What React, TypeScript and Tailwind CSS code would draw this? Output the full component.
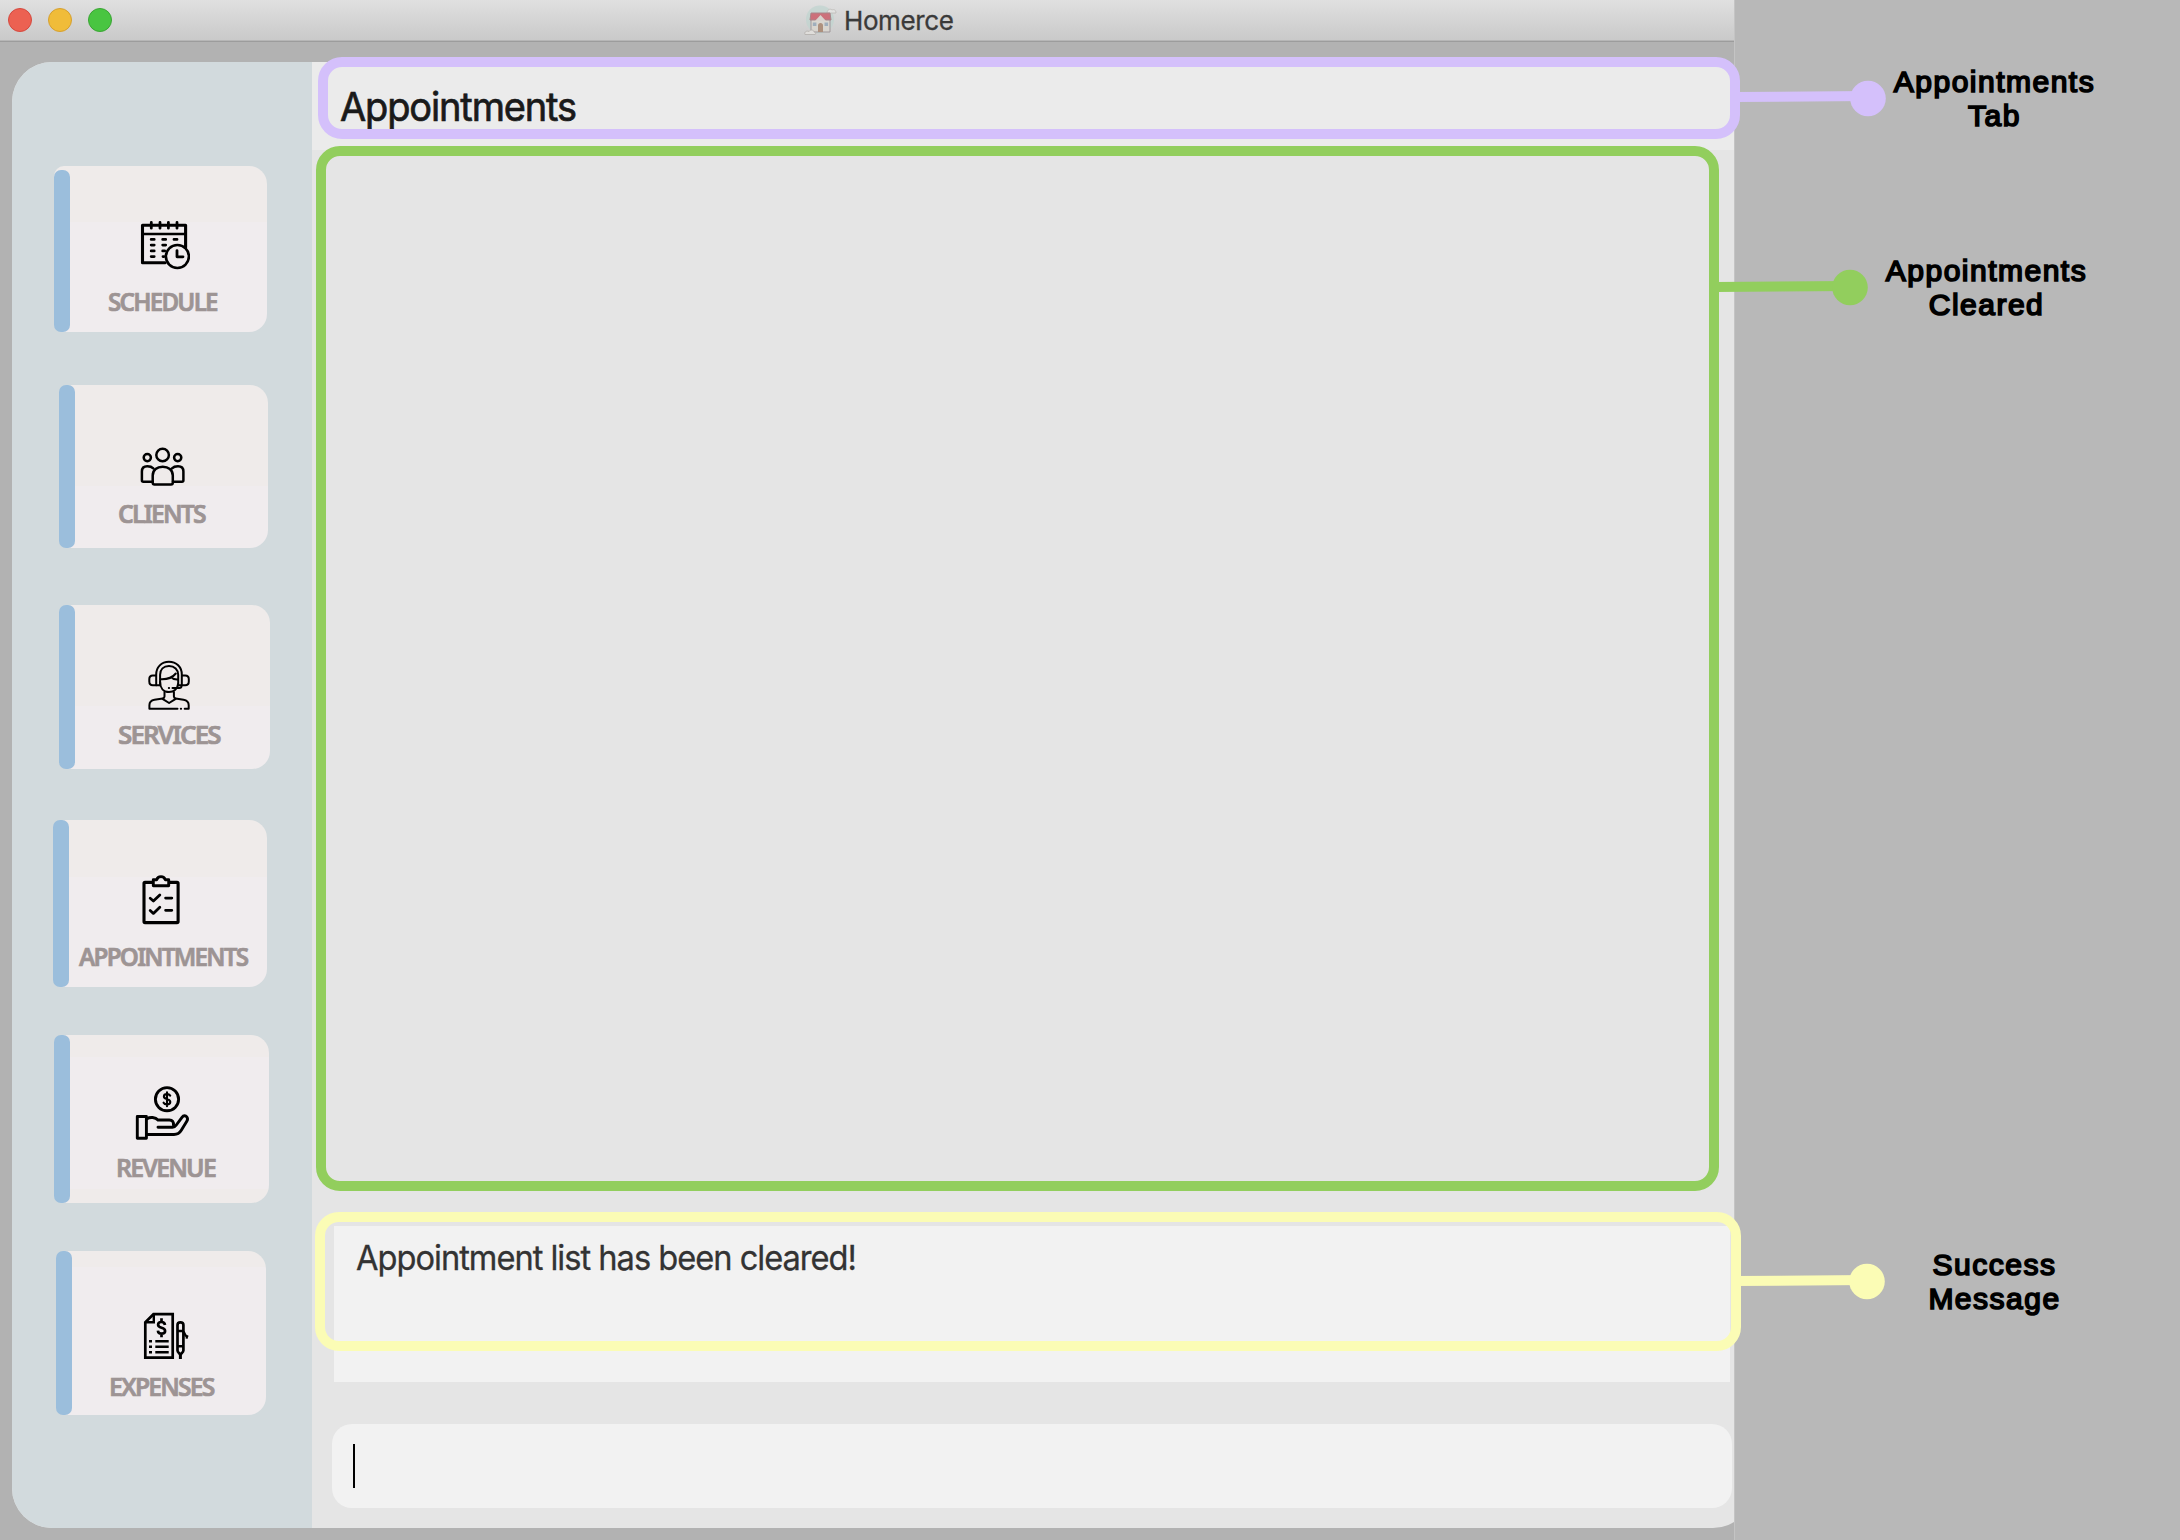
import type { ReactNode } from "react";

const ink = { fill: "none", stroke: "#000", strokeLinecap: "round", strokeLinejoin: "round" } as const;

function ScheduleIcon() {
  return (
    <svg className="block h-[50px] w-[50px]" viewBox="140 220 50 50" {...ink} strokeWidth={3.1}>
      <path d="M165 262.7H142.5V225.3H185.6V247.5" />
      <path d="M142.5 234H185.6" strokeWidth={2.6} />
      <path d="M151.3 222.4V228.2M160 222.4V228.2M168.4 222.4V228.2M177 222.4V228.2" strokeWidth={2.8} />
      <path
        d="M151.2 239.4h3M162.7 239.4h3M174 239.4h3M151.2 245.1h3M162.7 245.1h3M151.2 250.9h3M162.7 250.9h2M151.2 256.6h3M163 256.6h1"
        strokeWidth={2.8}
      />
      <circle cx="177.4" cy="256.5" r="11.5" strokeWidth={2.6} />
      <path d="M177 250.6V256.8H183" strokeWidth={2.8} />
    </svg>
  );
}

function ClientsIcon() {
  return (
    <svg className="block h-[40px] w-[46px]" viewBox="140 447 46 40" {...ink} strokeWidth={2.5}>
      <circle cx="162.6" cy="455" r="6.3" />
      <circle cx="147.3" cy="457.6" r="3.6" />
      <circle cx="177.7" cy="457.6" r="3.6" />
      <path d="M154.5 484.5C153.2 484.5 152.7 484 152.7 482.8V475.5C152.7 470 157 466.7 162.7 466.7C168.4 466.7 172.8 470 172.8 475.5V482.8C172.8 484 172.2 484.5 171 484.5Z" />
      <path d="M152.5 481.7H143.3C142.4 481.7 141.9 481.2 141.9 480.3V471.5C141.9 468 144 466.3 147.3 466.3C150 466.3 152 467 153.3 468.3" />
      <path d="M173 481.7H182C182.9 481.7 183.4 481.2 183.4 480.3V471.5C183.4 468 181.3 466.3 178 466.3C175.2 466.3 173.3 467 172 468.3" />
    </svg>
  );
}

function ServicesIcon() {
  return (
    <svg className="block h-[50px] w-[42px]" viewBox="148.5 660 42 50" {...ink} strokeWidth={2}>
      <path d="M156.7 685.2V674.5C156.7 667 162 661.8 169.4 661.8C176.8 661.8 182.3 667 182.3 674.5V685.2" />
      <path d="M160.6 685.2V674.8C160.6 669.5 164 666 169.5 666C175 666 178.7 669.5 178.7 674.8V685.2" />
      <path d="M156.5 675.5H153.3C151 675.5 149.8 677 149.8 679V681.5C149.8 684 151 685.2 153.3 685.2H160.5" />
      <path d="M182.5 675.5H185.7C188 675.5 189.3 677 189.3 679V681.5C189.3 684 188 685.2 185.7 685.2H178.7" />
      <path d="M160.6 682C160.6 688 164 692 169.5 692C174.6 692 178 688.5 178.6 684" />
      <path d="M161 679.3C167 679.6 173 677.6 176.3 673.5M171.8 677.2C173.5 679 176 679.6 178.5 679.4" />
      <path d="M182 686C182 687.4 181 688 179.8 688H173M169.3 688h.3" />
      <path d="M165 692V696.5C165 697.6 164.4 698.2 163.2 698.4L155 699.7C151.3 700.4 149.9 702.3 149.9 705.2V708.7H178" />
      <path d="M174.4 692V696.5C174.4 697.6 175 698.2 176.2 698.4L184 699.7C187.8 700.4 189.2 702.3 189.2 705.2V708.7H185.2M181.3 708.7h.3" />
      <path d="M163 698.8L169.6 703L176.2 698.8" />
    </svg>
  );
}

function ClipboardIcon() {
  return (
    <svg className="block h-[50px] w-[38px]" viewBox="142 875 38 50" {...ink} strokeWidth={3.1}>
      <path d="M152.5 882.4H145C144.3 882.4 144 882.7 144 883.4V921.5C144 922.3 144.3 922.6 145 922.6H177C177.8 922.6 178.1 922.3 178.1 921.5V883.4C178.1 882.7 177.8 882.4 177 882.4H169.5" />
      <path d="M153.3 885.8V879.7H156.8C157.3 877.7 158.7 876.6 161 876.6C163.2 876.6 164.6 877.7 165.2 879.7H168.7V885.8Z" strokeWidth={2.9} />
      <path d="M150.2 898.2L153.4 901L159.8 894.9M150.2 910.4L153.4 913.4L159.8 907.2M165.6 898.1H171.8M165.6 910.3H171.8" strokeWidth={2.8} />
    </svg>
  );
}

function RevenueIcon() {
  return (
    <svg className="block h-[56px] w-[56px]" viewBox="135 1085 56 56" {...ink} strokeWidth={2.9}>
      <circle cx="167" cy="1099.2" r="11.6" />
      <path d="M170.2 1095.6C169.5 1094.5 168.6 1094.1 167 1094.1C165 1094.1 163.9 1095.1 163.9 1096.4C163.9 1099.8 170.3 1098.3 170.3 1102C170.3 1103.5 169 1104.4 167 1104.4C165.2 1104.4 164.2 1103.9 163.6 1102.7M167 1092.2V1106.2" strokeWidth={2.1} />
      <path d="M137.3 1116.5H146.4V1138.2H137.3Z" />
      <path d="M147 1118.7C150 1116.8 155.4 1117 158 1120H169.3C172.6 1120 173.7 1122 173.5 1125.3" />
      <path d="M158 1127.3H172.5C174.3 1127.3 175.3 1126.5 176.3 1125L182 1117.3C183.5 1115.2 185.7 1115.4 186.8 1116.8C187.9 1118.2 187.7 1119.8 186.8 1121.3L181.3 1130.3C179.5 1133.3 177.4 1134.5 174 1134.5H147" />
    </svg>
  );
}

function ExpensesIcon() {
  return (
    <svg className="block h-[48px] w-[46px]" viewBox="143 1312 46 48" fill="none" stroke="#000" strokeWidth={2.7}>
      <path d="M153.5 1314.2H172.7V1357.7H145.3V1322.3Z" />
      <path d="M153.8 1314.5V1322.3H145.5" strokeWidth={2.4} />
      <path d="M165 1325C164.7 1322.8 163.6 1322 161.5 1322C159.3 1322 158.1 1323 158.1 1324.8C158.1 1328.8 165.1 1326.8 165.1 1331C165.1 1332.8 163.6 1333.7 161.5 1333.7C159.3 1333.7 158.1 1332.8 157.9 1330.6M161.5 1318.3V1322M161.5 1333.7V1337.3" />
      <path d="M155.3 1341.2H168.7M155.3 1346.7H168.7M155.3 1352.3H168.7M149 1341.2H152M149 1346.7H152M149 1352.3H152" strokeWidth={2.5} />
      <path d="M177.5 1325C177.5 1323 178.6 1322.3 180.4 1322.3C182.2 1322.3 183.4 1323 183.4 1325V1350.5C183.4 1352.3 181.6 1353 180.4 1354.5C179.3 1353 177.5 1352.3 177.5 1350.5Z" />
      <path d="M177.5 1331H183.4M177.5 1346.2H183.4" strokeWidth={2.4} />
      <path d="M180.4 1353V1359" strokeWidth={3} />
      <path d="M183.6 1331.5L185.6 1335.6L187.2 1336.4L186.4 1338.6" strokeWidth={2.2} />
    </svg>
  );
}

function HouseIcon() {
  return (
    <svg className="block h-[32px] w-[34px] opacity-75" viewBox="0 0 34 32">
      <circle cx="17" cy="15.5" r="14" fill="#c1d5d0" />
      <path d="M24 9c0-3 3-5 5-3c2-1 4 0 4 3z" fill="#e6e6e4" stroke="#b3b0ab" strokeWidth=".8" />
      <path d="M8 15H27V28H8z" fill="#dcd8cf" stroke="#91858a" strokeWidth="1" />
      <path d="M8 9H27L28 16H7z" fill="#c94f5c" stroke="#9a6a70" strokeWidth="1" />
      <path d="M17.5 11L23 17H12z" fill="#d9d2cb" />
      <path d="M15 21.5a2.5 2.5 0 0 1 5 0V28H15z" fill="#a37c62" />
      <path d="M9.8 18.5h3.6v3.6H9.8zM21.5 18.5h3.6v3.6H21.5z" fill="#8fa3b5" />
      <path d="M2 30.5c-1-3 2-4 4-3c1-2 5-2 5 .5c2 0 2 2.5 1 2.5z" fill="#e6e4e0" stroke="#aaa5a0" strokeWidth=".8" />
    </svg>
  );
}

type Card = {
  label: string;
  icon: ReactNode;
  card: string;
  bar: string;
  iconPos: string;
  text: string;
};

const cards: Card[] = [
  {
    label: "SCHEDULE",
    icon: <ScheduleIcon />,
    card: "mt-[104px] ml-[42px] h-[166px] w-[213px] bg-[linear-gradient(#efebea_56px,#f0ecee_56px)]",
    bar: "mt-[4px] h-[162px]",
    iconPos: "mt-[54px] ml-[70px]",
    text: "mt-[18px] ml-[38px] scale-x-[0.93]",
  },
  {
    label: "CLIENTS",
    icon: <ClientsIcon />,
    card: "mt-[53px] ml-[47px] h-[163px] w-[209px] bg-[linear-gradient(#efebea_101px,#f0ecee_101px)]",
    bar: "h-[163px]",
    iconPos: "mt-[62px] ml-[65px]",
    text: "mt-[13px] ml-[43px] scale-x-[0.95]",
  },
  {
    label: "SERVICES",
    icon: <ServicesIcon />,
    card: "mt-[57px] ml-[47px] h-[164px] w-[211px] bg-[linear-gradient(#efebea_101px,#f0ecee_101px)]",
    bar: "h-[164px]",
    iconPos: "mt-[55px] ml-[73px]",
    text: "mt-[11px] ml-[43px] scale-x-100",
  },
  {
    label: "APPOINTMENTS",
    icon: <ClipboardIcon />,
    card: "mt-[51px] ml-[41px] h-[167px] w-[214px] bg-[linear-gradient(#efebea_57px,#f0ecee_57px)]",
    bar: "h-[167px]",
    iconPos: "mt-[55px] ml-[73px]",
    text: "mt-[18px] ml-[10px] scale-x-[0.933]",
  },
  {
    label: "REVENUE",
    icon: <RevenueIcon />,
    card: "mt-[48px] ml-[42px] h-[168px] w-[215px] bg-[linear-gradient(#efebea_22px,#f0ecee_22px,#f0ecee_154px,#efebea_154px)]",
    bar: "h-[168px]",
    iconPos: "mt-[50px] ml-[65px]",
    text: "mt-[13px] ml-[46px] scale-x-[0.957]",
  },
  {
    label: "EXPENSES",
    icon: <ExpensesIcon />,
    card: "mt-[48px] ml-[44px] h-[164px] w-[210px] bg-[linear-gradient(#efebea_16px,#f0ecee_16px)]",
    bar: "h-[164px]",
    iconPos: "mt-[61px] ml-[71px]",
    text: "mt-[13px] ml-[37px] scale-x-[0.95]",
  },
];

function NavCard({ item }: { item: Card }) {
  return (
    <div className={`flex shrink-0 items-start rounded-l-[10px] rounded-r-[18px] ${item.card}`}>
      <div className={`w-4 shrink-0 rounded-[7px] bg-[#9bbedc] ${item.bar}`} />
      <div className="flex flex-col items-start">
        <div className={item.iconPos}>{item.icon}</div>
        <div
          className={`origin-left font-['Noto_Sans',sans-serif] text-[26px] leading-[26px] font-semibold tracking-[-1.9px] whitespace-nowrap text-[#9d9494] [-webkit-text-stroke:0.7px_#9d9494] ${item.text}`}
        >
          {item.label}
        </div>
      </div>
    </div>
  );
}

function Callout({ className, lines }: { className: string; lines: string[] }) {
  return (
    <div
      className={`w-[221px] text-center font-['Liberation_Sans',sans-serif] text-[30px] leading-[34px] tracking-[1.5px] text-black [-webkit-text-stroke:1.7px_#000] ${className}`}
    >
      {lines.map((line) => (
        <div key={line}>{line}</div>
      ))}
    </div>
  );
}

export default function App() {
  return (
    <div className="relative flex h-[1540px] w-[2180px] overflow-hidden bg-[#b8b8b8]">
      <div className="flex w-[1735px] shrink-0 flex-col overflow-hidden border-r border-[#c4c4c4] bg-[#b2b2b2]">
        <header className="flex h-[42px] shrink-0 items-start border-b border-[#9c9c9c] bg-linear-to-b from-[#e0e0e0] to-[#c9c9c9]">
          <div className="flex h-[41px] w-full border-b border-[#b6b6b6]">
            <div className="flex gap-4 pt-2 pl-2">
              <span className="size-6 rounded-full border border-[#d5493f] bg-[#ec6152]" />
              <span className="size-6 rounded-full border border-[#d6a030] bg-[#f0bc39]" />
              <span className="size-6 rounded-full border border-[#3aa534] bg-[#49c541]" />
            </div>
            <div className="mt-1 ml-[691px]">
              <HouseIcon />
            </div>
            <h1 className="ml-[7px] font-['Inter',sans-serif] text-[26px] leading-[42px] tracking-[-0.4px] text-[#3a3a3a] [-webkit-text-stroke:0.3px_#3a3a3a]">
              Homerce
            </h1>
          </div>
        </header>
        <div className="mt-5 ml-3 flex h-[1466px] w-[1741px] shrink-0 overflow-hidden rounded-[40px] bg-[#e5e5e5]">
          <nav className="flex w-[300px] shrink-0 flex-col items-start bg-[#d2dadd]">
            {cards.map((item) => (
              <NavCard key={item.label} item={item} />
            ))}
          </nav>
          <main className="flex grow flex-col">
            <div className="h-[88px] shrink-0 bg-[#ebebeb] pt-[21px] pl-[28px]">
              <h2 className="origin-left scale-x-[0.95] font-['Inter',sans-serif] text-[40px] leading-[48px] tracking-[-1.2px] text-[#1a1a1a] [-webkit-text-stroke:0.7px_#1a1a1a]">
                Appointments
              </h2>
            </div>
            <div className="h-[1076px] shrink-0 bg-[#e5e5e5]" />
            <div className="ml-[22px] h-[156px] w-[1396px] shrink-0 bg-[#f2f2f2] pt-[12px] pl-[22px]">
              <p className="origin-left scale-x-[0.96] font-['Inter',sans-serif] text-[34px] leading-10 tracking-[-1.06px] text-[#333] [-webkit-text-stroke:0.3px_#333]">
                Appointment list has been cleared!
              </p>
            </div>
            <div className="mt-[42px] ml-5 h-[84px] w-[1400px] shrink-0 rounded-[20px] bg-[#f2f2f2] pt-5 pl-[21px]">
              <div className="h-11 w-0.5 bg-black" />
            </div>
          </main>
        </div>
      </div>
      <aside className="flex grow flex-col">
        <Callout className="mt-[65px] ml-[149px]" lines={["Appointments", "Tab"]} />
        <Callout className="mt-[121px] ml-[141px]" lines={["Appointments", "Cleared"]} />
        <Callout className="mt-[926px] ml-[149px]" lines={["Success", "Message"]} />
      </aside>

      <div className="absolute top-[57px] left-[318px] h-[82px] w-[1422px] rounded-[24px] border-[10px] border-[#d4c0fb]" />
      <div className="absolute top-[146px] left-[316px] h-[1045px] w-[1403px] rounded-[24px] border-[10px] border-[#92ce5d]" />
      <div className="absolute top-[1212px] left-[315px] h-[139px] w-[1426px] rounded-[24px] border-[10px] border-[#fbfcb5]" />
      <svg className="absolute top-[75px] left-[1735px] h-[50px] w-[155px]" viewBox="1735 75 155 50">
        <path d="M1735 97L1868 96" stroke="#d4c0fb" strokeWidth="10" />
        <circle cx="1868" cy="98.5" r="17.8" fill="#d4c0fb" />
      </svg>
      <svg className="absolute top-[265px] left-[1715px] h-[50px] w-[155px]" viewBox="1715 265 155 50">
        <path d="M1715 287L1850 286" stroke="#92ce5d" strokeWidth="10" />
        <circle cx="1850" cy="287.5" r="17.8" fill="#92ce5d" />
      </svg>
      <svg className="absolute top-[1255px] left-[1735px] h-[50px] w-[155px]" viewBox="1735 1255 155 50">
        <path d="M1735 1281L1867 1280" stroke="#fbfcb5" strokeWidth="10" />
        <circle cx="1867" cy="1281.5" r="17.8" fill="#fbfcb5" />
      </svg>
    </div>
  );
}
